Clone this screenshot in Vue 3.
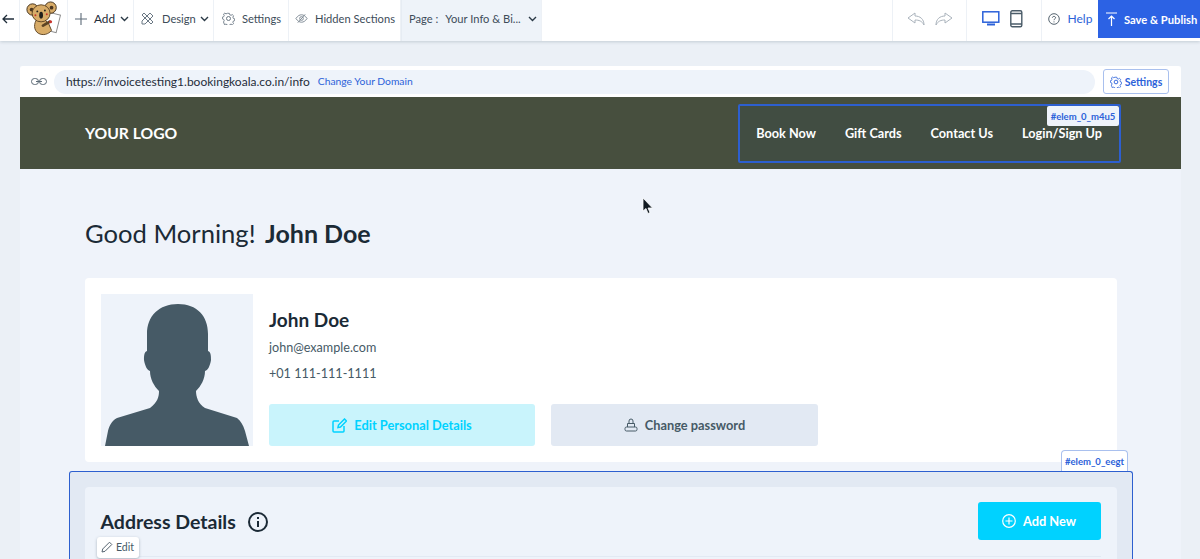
<script setup>
const nav = ['Book Now', 'Gift Cards', 'Contact Us', 'Login/Sign Up']
</script>

<template>
  <div class="page">
    <header class="toolbar">
      <div class="cell back">
        <svg width="12" height="10" viewBox="0 0 12 10" fill="none" stroke="#1f2d3a" stroke-width="1.3"><path d="M12 5H1M5 1 1 5l4 4"/></svg>
      </div>
      <div class="cell logo">
        <svg width="36" height="36" viewBox="0 0 36 38">
          <g transform="rotate(14 27 24)"><rect x="20" y="13" width="14" height="19" fill="#fff" stroke="#8b8b8b"/></g>
          <path d="M12 19C8 23 8 31 13 34C18 37 24 35 27 31L24 24L20 20Z" fill="#d8ac68" stroke="#5d4424"/>
          <circle cx="7" cy="9" r="6" fill="#d8ac68" stroke="#3f2d18"/>
          <circle cx="26" cy="7" r="6" fill="#d8ac68" stroke="#3f2d18"/>
          <circle cx="6" cy="9" r="2" fill="#4a3520"/>
          <circle cx="27" cy="7" r="2" fill="#4a3520"/>
          <ellipse cx="16" cy="13" rx="9.5" ry="9" fill="#d8ac68" stroke="#5d4424"/>
          <ellipse cx="16" cy="15" rx="2" ry="3.6" fill="#22201c"/>
          <circle cx="12" cy="11" r="1" fill="#22201c"/>
          <circle cx="20" cy="10" r="1" fill="#22201c"/>
          <circle cx="10" cy="15" r="1" fill="#c8322a"/>
          <circle cx="22" cy="14" r="1" fill="#c8322a"/>
          <path d="M18 26 25 22" stroke="#5d4424" stroke-width="3" stroke-linecap="round"/>
          <circle cx="26" cy="22" r="1.6" fill="#c8322a"/>
        </svg>
      </div>
      <div class="cell add">
        <svg width="12" height="12" viewBox="0 0 12 12" stroke="#5d6b78" stroke-width="1.1"><path d="M6 0V12M0 6H12"/></svg>
        <span>Add</span>
        <svg class="chev" width="9" height="6" viewBox="0 0 9 6" fill="none"><path d="M1 1 4.5 4.5 8 1"/></svg>
      </div>
      <div class="cell design">
        <svg width="13" height="13" viewBox="0 0 13 13" fill="none" stroke="#6b7884"><path d="M1 3 10 12l2-2L3 1zM9 1l3 3-8 8H1V9z"/></svg>
        <span>Design</span>
        <svg class="chev" width="9" height="6" viewBox="0 0 9 6" fill="none"><path d="M1 1 4.5 4.5 8 1"/></svg>
      </div>
      <div class="cell settings">
        <svg width="13" height="13" viewBox="0 0 13 13" fill="none" stroke="#6b7884"><circle cx="6.500" cy="6.500" r="2"/><path d="M5.500 .8h2l.4 1.600 1.500.6 1.400-.8 1.400 1.400-.8 1.400.6 1.500 1.400.4v2l-1.400.4-.6 1.500.8 1.400-1.400 1.400-1.400-.8-1.500.6-.4 1.400h-2l-.4-1.400-1.500-.6-1.400.8L1 10.400l.8-1.400-.6-1.500L-.2 7V5l1.400-.4.6-1.500L1 1.700 2.400.6l1.400.8 1.500-.6z" transform="translate(.6 .6) scale(.9)"/></svg>
        <span>Settings</span>
      </div>
      <div class="cell hidden-s">
        <svg width="13" height="11" viewBox="0 0 14 11" fill="none" stroke="#7a8691"><path d="M1 5.500C3 2.500 5 1.500 7 1.500S11 2.500 13 5.500C11 8.500 9 9.500 7 9.500S3 8.500 1 5.500Z"/><circle cx="7" cy="5.500" r="2"/><path d="M3 10 11 1"/></svg>
        <span>Hidden Sections</span>
      </div>
      <div class="cell pagesel">
        <span class="pg">Page :</span>
        <span>Your Info &amp; Bi...</span>
        <svg class="chev" width="9" height="6" viewBox="0 0 9 6" fill="none"><path d="M1 1 4.500 4.500 8 1"/></svg>
      </div>
      <div class="spacer"></div>
      <div class="cell undo">
        <svg width="18" height="14" viewBox="0 0 18 14" fill="none" stroke="#aab3bc" stroke-linejoin="round"><path d="M8 1 1 6l7 5V8c4 0 7 1 9 5 0-6-4-9-9-9z"/></svg>
        <svg width="18" height="14" viewBox="0 0 18 14" fill="none" stroke="#aab3bc" stroke-linejoin="round"><path d="M10 1l7 5-7 5V8c-4 0-7 1-9 5 0-6 4-9 9-9z"/></svg>
      </div>
      <div class="cell device">
        <svg width="18" height="15" viewBox="0 0 18 15" fill="none" stroke="#2c62d9" stroke-width="1.500"><rect x=".8" y=".8" width="16" height="10.400"/><path d="M5 13.500h8" stroke-width="2"/></svg>
        <svg width="13" height="18" viewBox="0 0 13 18" fill="none" stroke="#4b5c69" stroke-width="1.400"><rect x=".8" y=".8" width="11" height="16" rx="1.500"/><path d="M1 3.500h11M1 14h11"/></svg>
      </div>
      <div class="cell help">
        <svg width="12" height="12" viewBox="0 0 12 12" fill="none" stroke="#55636f"><circle cx="6" cy="6" r="5.300"/><path d="M4.400 4.600C4.400 3 7.600 3 7.600 4.700 7.600 5.900 6 5.800 6 7.200M6 8.400v1"/></svg>
        <span>Help</span>
      </div>
      <button class="publish">
        <svg width="11" height="14" viewBox="0 0 11 14" fill="none" stroke="#fff" stroke-width="1.200"><path d="M0 1h11M5.500 14V4M2.500 7l3-3 3 3"/></svg>
        <span>Save &amp; Publish</span>
      </button>
    </header>

    <main class="canvas">
      <section class="window">
        <div class="urlbar">
          <svg width="16" height="7" viewBox="0 0 16 7" fill="none" stroke="#5c6a76"><rect x=".5" y=".5" width="7" height="6" rx="3"/><rect x="8.500" y=".5" width="7" height="6" rx="3"/><path d="M5 3.500h6"/></svg>
          <div class="url">
            <span class="addr">https://invoicetesting1.bookingkoala.co.in/info</span>
            <a class="domain">Change Your Domain</a>
          </div>
          <button class="urlset">
            <svg width="12" height="12" viewBox="0 0 13 13" fill="none" stroke="#2c62d9"><circle cx="6.500" cy="6.500" r="2"/><path d="M5.500 .8h2l.4 1.600 1.500.6 1.400-.8 1.400 1.400-.8 1.400.6 1.500 1.400.4v2l-1.400.4-.6 1.500.8 1.400-1.400 1.400-1.400-.8-1.500.6-.4 1.400h-2l-.4-1.400-1.500-.6-1.400.8L1 10.400l.8-1.400-.6-1.500L-.2 7V5l1.400-.4.6-1.500L1 1.700 2.400.6l1.400.8 1.500-.6z" transform="translate(.6 .6) scale(.9)"/></svg>
            Settings
          </button>
        </div>

        <div class="sitehead">
          <div class="brand">YOUR LOGO</div>
          <nav class="nav">
            <a v-for="n in nav" :key="n">{{ n }}</a>
          </nav>
          <div class="navsel"><span class="tag navtag">#elem_0_m4u5</span></div>
        </div>

        <div class="content">
          <h1 class="greet">Good Morning! <b>John Doe</b></h1>
          <div class="profile">
            <div class="avatar">
              <svg width="152" height="152" viewBox="0 0 152 152"><path fill="#465a66" d="M77 10C58 10 46 22 46 40L46 57C43 58 43 62 43 66C44 72 46 76 49 77C49 85 53 92 58 97C58 102 57 108 49 114L16 124C10 127 8 133 7 137L4 152H148L144 137C142 131 140 127 136 124L104 114C97 110 95 102 95 97C100 92 104 85 104 77C107 76 109 72 110 66C110 62 110 58 107 57L107 40C107 22 96 10 77 10Z"/></svg>
            </div>
            <div class="info">
              <div class="name">John Doe</div>
              <div class="line first">john@example.com</div>
              <div class="line">+01 111-111-1111</div>
              <div class="btns">
                <button class="btn edit">
                  <svg width="15" height="15" viewBox="0 0 15 15" fill="none" stroke="#00d2ff" stroke-width="1.500"><path d="M12 8v5a1 1 0 0 1-1 1H2a1 1 0 0 1-1-1V4a1 1 0 0 1 1-1h5"/><path d="M6 9.500 6.500 7l6-6 2 2-6 6z"/></svg>
                  Edit Personal Details
                </button>
                <button class="btn pass">
                  <svg width="14" height="14" viewBox="0 0 14 14" fill="none" stroke="#465a66"><rect x="1" y="9" width="12" height="4" rx="1.500"/><path d="M3.500 9V5.500h7V9M5 5.500V3a2 2 0 0 1 4 0v2.500"/></svg>
                  Change password
                </button>
              </div>
            </div>
          </div>

          <div class="section">
            <span class="tag sectag">#elem_0_eegt</span>
            <div class="inner">
              <div class="sechead">
                <h2>Address Details</h2>
                <svg class="infoic" width="20" height="20" viewBox="0 0 20 20" fill="none" stroke="#1b2a36" stroke-width="2"><circle cx="10" cy="10" r="9"/><path d="M10 9v6M10 5v2"/></svg>
                <button class="addnew">
                  <svg width="14" height="14" viewBox="0 0 14 14" fill="none" stroke="#fff" stroke-width="1.200"><circle cx="7" cy="7" r="6.300"/><path d="M7 3.500v7M3.500 7h7"/></svg>
                  Add New
                </button>
              </div>
              <div class="rule"></div>
            </div>
            <button class="edittag">
              <svg width="12" height="12" viewBox="0 0 12 12" fill="none" stroke="#55636f"><path d="M1 11 1.700 8 8.500 1.200l2.300 2.300L4 10.300z"/></svg>
              Edit
            </button>
          </div>
        </div>
      </section>
    </main>

    <svg class="cursor" width="12" height="18" viewBox="0 0 12 18"><path d="M1 1V14L4 11.500 6 16.500 8 15.500 6 11H10.500Z" fill="#111a22" stroke="#fff" stroke-width=".8"/></svg>
  </div>
</template>

<style>
html, body { margin: 0; overflow: hidden; }
</style>

<style scoped>
* { box-sizing: border-box; }
.page {
  position: relative;
  width: 1200px;
  height: 559px;
  overflow: hidden;
  background: #ebf0f6;
  font-family: Lato, "Liberation Sans", sans-serif;
  color: #1b2a36;
}
button { font-family: inherit; border: none; cursor: pointer; }
.toolbar {
  display: flex;
  height: 41px;
  background: #fff;
  box-shadow: 0 1px 3px rgba(60, 80, 100, .22);
  font-size: 11.150px;
  color: #3d4c59;
  position: relative;
  z-index: 2;
  white-space: nowrap;
}
.cell {
  display: flex;
  align-items: center;
  gap: 7px;
  border-right: 1px solid #edf1f6;
  height: 41px;
  padding-bottom: 4px;
  flex: none;
}
.back { width: 20px; padding-left: 2px; }
.logo { width: 48px; padding-left: 5px; }
.add { width: 66px; padding-left: 7px; color: #1f2d3a; font-size: 11.800px; }
.add .chev { margin-left: -2px; }
.design { width: 80px; padding-left: 7px; gap: 8px; }
.design .chev { margin-left: -4px; }
.settings { width: 75px; padding-left: 8px; gap: 7px; }
.hidden-s { width: 112px; padding-left: 6px; gap: 7px; }
.pagesel { width: 141px; padding-left: 7px; background: #eef3f9; border-left: 1px solid #e6ecf3; gap: 0; }
.pg { margin-right: 7px; }
.pagesel .chev { margin-left: 7px; }
.chev { stroke: #2a3946; stroke-width: 1.400; }
.spacer { flex: 1; border-right: 1px solid #edf1f6; }
.undo { width: 74px; gap: 10px; justify-content: center; }
.device { width: 75px; gap: 10px; justify-content: center; padding-right: 3px; }
.help { width: 56px; color: #2c62d9; gap: 8px; border: none; justify-content: center; font-size: 12px; }
.publish {
  width: 102px;
  height: 38px;
  background: #2c62e4;
  color: #fff;
  font-size: 11.200px;
  font-weight: 700;
  display: flex;
  align-items: center;
  gap: 7px;
  padding: 0 0 0 8px;
  white-space: nowrap;
}
.canvas { padding: 25px 19px 0 20px; height: 518px; }
.window { width: 1161px; background: #eff3fa; }
.urlbar {
  display: flex;
  align-items: center;
  height: 31px;
  background: #fff;
  border-radius: 3px 3px 0 0;
  padding: 0 12px 0 11px;
}
.url {
  display: flex;
  align-items: center;
  gap: 8px;
  width: 1042px;
  height: 24px;
  margin-left: 7px;
  padding-left: 12px;
  border-radius: 12px;
  background: #eef3fa;
}
.addr { font-size: 12px; color: #1f2d3a; }
.domain { font-size: 10.300px; color: #2c62d9; margin-top: -1px; }
.urlset {
  display: flex;
  align-items: center;
  justify-content: center;
  gap: 3px;
  width: 66px;
  height: 25px;
  margin-left: 8px;
  background: #fff;
  border: 1px solid #a9c0ee;
  border-radius: 3px;
  color: #2c62d9;
  font-size: 10.500px;
  font-weight: 700;
  padding: 0;
}
.sitehead {
  position: relative;
  display: flex;
  align-items: center;
  justify-content: space-between;
  height: 72px;
  padding: 0 79px 0 65px;
  background: #474f3e;
  color: #fff;
}
.brand { font-size: 15.700px; font-weight: 700; }
.nav { display: flex; gap: 29px; font-size: 12.700px; font-weight: 700; position: relative; z-index: 1; }
.navsel {
  position: absolute;
  left: 718px;
  top: 7px;
  width: 383px;
  height: 59px;
  border: 2px solid #2d5fcf;
  border-radius: 2px;
  background: rgba(40, 70, 90, .18);
}
.tag {
  position: absolute;
  font-size: 9.500px;
  font-weight: 700;
  color: #2c62d9;
  display: flex;
  align-items: center;
  justify-content: center;
}
.navtag {
  right: 0;
  top: 0;
  width: 72px;
  height: 20px;
  background: #eef3fa;
  border-radius: 2px;
}
.content { padding: 0 64px 0 65px; }
.greet {
  margin: 0;
  padding-top: 47px;
  height: 109px;
  font-size: 25.600px;
  font-weight: 400;
  line-height: 34px;
}
.greet b { font-weight: 700; margin-left: 3px; font-size: 25px; }
.profile {
  display: flex;
  height: 184px;
  padding: 16px;
  background: #fff;
  border-radius: 4px;
  width: 1032px;
}
.avatar { width: 152px; height: 152px; background: #eef3fa; flex: none; }
.avatar svg { display: block; }
.info { margin-left: 16px; flex: 1; }
.name { font-size: 19px; font-weight: 700; line-height: 24px; margin-top: 14px; color: #1b2a36; }
.line { font-size: 12.600px; line-height: 18px; color: #465a66; margin-top: 8px; }
.line.first { margin-top: 7px; }
.btns { display: flex; gap: 16px; margin-top: 21px; }
.btn {
  width: 267px;
  height: 42px;
  border-radius: 3px;
  font-size: 12.800px;
  font-weight: 700;
  display: flex;
  align-items: center;
  justify-content: center;
  gap: 7px;
  padding: 0;
}
.edit { width: 266px; background: #c9f4fc; color: #00d2ff; }
.pass { background: #e2e9f3; color: #465a66; }
.section {
  position: relative;
  width: 1064px;
  height: 120px;
  margin: 9px 0 0 -16px;
  padding: 14.500px;
  background: #e2e9f3;
  border: 1.500px solid #2d5fcf;
  border-bottom: 0;
  border-radius: 3px 3px 0 0;
}
.sectag {
  top: -22px;
  right: 4px;
  width: 67px;
  height: 21px;
  background: #fff;
  border: 1px solid #a9c0ee;
  border-bottom: 0;
  border-radius: 4px 4px 0 0;
}
.inner { background: #eef3fa; height: 120px; border-radius: 4px; padding: 15px 16px 0; width: 1032px; }
.sechead { display: flex; align-items: center; height: 38px; }
.sechead h2 { margin: 0; font-size: 19.500px; font-weight: 700; color: #1b2a36; line-height: 38px; padding-top: 2px; }
.infoic { margin-left: 12px; margin-top: 2px; }
.addnew {
  margin-left: auto;
  width: 123px;
  height: 38px;
  background: #00d2ff;
  color: #fff;
  border-radius: 3px;
  font-size: 12.800px;
  font-weight: 700;
  display: flex;
  align-items: center;
  justify-content: center;
  gap: 7px;
  padding: 0;
}
.rule { height: 1px; background: #e2e9f3; margin-top: 16px; }
.edittag {
  position: absolute;
  left: 26.500px;
  top: 64.500px;
  width: 42px;
  height: 21px;
  background: #fff;
  border-radius: 3px;
  box-shadow: 0 1px 3px rgba(40, 60, 80, .35);
  font-size: 10.500px;
  color: #465a66;
  display: flex;
  align-items: center;
  justify-content: center;
  gap: 3px;
  padding: 0;
}
.cursor { position: absolute; left: 642px; top: 197px; }
</style>
